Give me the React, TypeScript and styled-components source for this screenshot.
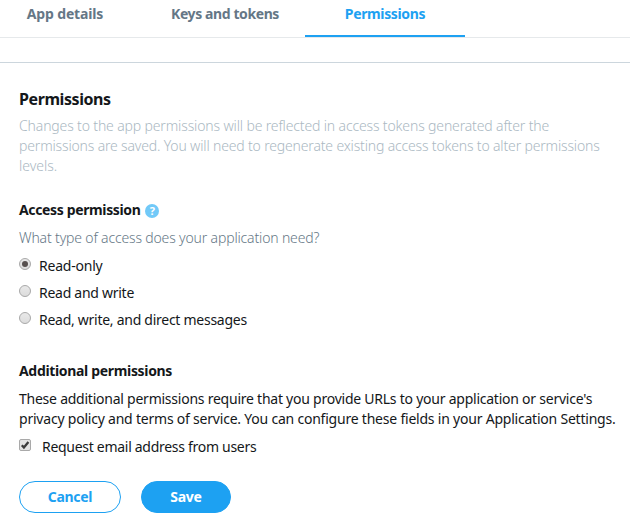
import React from 'react';
import styled, { createGlobalStyle } from 'styled-components';

const GlobalStyle = createGlobalStyle`
  * { box-sizing: border-box; }
  body {
    margin: 0;
    background: #fff;
    color: #14171a;
    font: 400 14px/20px 'Noto Sans', 'Open Sans', sans-serif;
  }
`;

const Page = styled.div`
  width: 630px;
  height: 520px;
  overflow: hidden;
`;

const TabBar = styled.nav`
  display: flex;
  height: 38px;
  margin-left: -15px;
  border-bottom: 1px solid #e6e9eb;
`;

const Tab = styled.a<{ $active?: boolean }>`
  display: flex;
  justify-content: center;
  width: 160px;
  height: 37px;
  padding-top: 4px;
  border-bottom: 2px solid ${p => (p.$active ? '#1da1f2' : 'transparent')};
  color: ${p => (p.$active ? '#1da1f2' : '#657786')};
  font-weight: 700;
`;

const Content = styled.main`
  margin-top: 24px;
  padding: 26px 0 0 19px;
  border-top: 1px solid #ccd6dd;
`;

const Title = styled.h1`
  margin: 0;
  font-size: 16px;
  font-weight: 700;
  line-height: 20px;
`;

const Heading = styled.h2`
  display: flex;
  align-items: center;
  gap: 5px;
  margin: 0;
  font-size: 14px;
  font-weight: 700;
  line-height: 20px;
`;

const Copy = styled.p<{ $tone?: 'muted' | 'hint' }>`
  margin: 0;
  color: ${p => (p.$tone === 'muted' ? '#aab8c2' : p.$tone === 'hint' ? '#657786' : '#14171a')};
  font-weight: ${p => (p.$tone ? 300 : 400)};
`;

const Line = styled.span<{ $track: number }>`
  display: block;
  white-space: nowrap;
  letter-spacing: ${p => p.$track}px;
`;

const Intro = styled.section`
  padding-bottom: 24px;
  ${Copy} { margin-top: 7px; }
`;

const Access = styled.section`
  padding-bottom: 31px;
  ${Copy} { margin-top: 8px; }
`;

const Extra = styled.section`
  ${Copy} { margin-top: 8px; }
`;

const Options = styled.div`
  display: flex;
  flex-direction: column;
  gap: 7px;
  margin-top: 8px;
`;

const Option = styled.label<{ $gap: number }>`
  display: flex;
  align-items: flex-start;
  gap: ${p => p.$gap}px;
  height: 20px;
`;

const Mark = styled.svg`
  display: block;
  flex: none;
  width: 12px;
  height: 12px;
  margin-top: 2px;
`;

const CheckRow = styled.div`
  margin-top: 8px;
`;

const Actions = styled.div`
  display: flex;
  gap: 20px;
  margin-top: 24px;
`;

const Button = styled.button<{ $width: number; $primary?: boolean }>`
  display: flex;
  align-items: center;
  justify-content: center;
  width: ${p => p.$width}px;
  height: 32px;
  padding: 0;
  border: 1px solid #1da1f2;
  border-radius: 16px;
  background: ${p => (p.$primary ? '#1da1f2' : '#fff')};
  color: ${p => (p.$primary ? '#fff' : '#1da1f2')};
  font: inherit;
  font-weight: 700;
`;

const HelpBadge = styled.span`
  display: flex;
  align-items: center;
  justify-content: center;
  width: 14px;
  height: 14px;
  margin-top: 2px;
  border-radius: 50%;
  background: #71c9f8;
  color: #fff;
  font-size: 11px;
  font-weight: 700;
  line-height: 14px;
`;

function Radio({ id, checked }: { id: string; checked?: boolean }) {
  return (
    <Mark viewBox="0 0 12 12">
      <defs>
        <linearGradient id={id} x1="0" y1="0" x2="0" y2="1">
          <stop offset="0" stopColor="#e9e9e9" />
          <stop offset="1" stopColor="#dcdcdc" />
        </linearGradient>
      </defs>
      <circle cx="6" cy="6" r="5.5" fill={`url(#${id})`} stroke="#a9a9a9" />
      {checked && <circle cx="6" cy="6" r="3" fill="#57504f" />}
    </Mark>
  );
}

function Checkbox() {
  return (
    <Mark viewBox="0 0 12 12">
      <rect x="0.5" y="0.5" width="11" height="11" rx="1.5" fill="#e4e4e4" stroke="#a9a9a9" />
      <path d="M2.8 6.2 4.9 8.4 9.4 3" fill="none" stroke="#3c3c3c" strokeWidth="2.3" />
    </Mark>
  );
}

const choices = [
  { id: 'read', label: 'Read-only', track: -0.22, checked: true },
  { id: 'write', label: 'Read and write', track: -0.27 },
  { id: 'direct', label: 'Read, write, and direct messages', track: -0.27 },
];

export default function App() {
  return (
    <>
      <GlobalStyle />
      <Page>
        <TabBar>
          <Tab><Line $track={-0.15}>App details</Line></Tab>
          <Tab><Line $track={-0.4}>Keys and tokens</Line></Tab>
          <Tab $active><Line $track={-0.35}>Permissions</Line></Tab>
        </TabBar>
        <Content>
          <Intro>
            <Title><Line $track={-0.42}>Permissions</Line></Title>
            <Copy $tone="muted">
              <Line $track={-0.145}>Changes to the app permissions will be reflected in access tokens generated after the</Line>
              <Line $track={-0.165}>permissions are saved. You will need to regenerate existing access tokens to alter permissions</Line>
              <Line $track={0}>levels.</Line>
            </Copy>
          </Intro>
          <Access>
            <Heading>
              <Line $track={-0.36}>Access permission</Line>
              <HelpBadge>?</HelpBadge>
            </Heading>
            <Copy $tone="hint"><Line $track={-0.16}>What type of access does your application need?</Line></Copy>
            <Options>
              {choices.map(c => (
                <Option key={c.id} $gap={8}>
                  <Radio id={c.id} checked={c.checked} />
                  <Line $track={c.track}>{c.label}</Line>
                </Option>
              ))}
            </Options>
          </Access>
          <Extra>
            <Heading><Line $track={-0.33}>Additional permissions</Line></Heading>
            <Copy>
              <Line $track={-0.24}>These additional permissions require that you provide URLs to your application or service's</Line>
              <Line $track={-0.215}>privacy policy and terms of service. You can configure these fields in your Application Settings.</Line>
            </Copy>
            <CheckRow>
              <Option $gap={11}>
                <Checkbox />
                <Line $track={-0.29}>Request email address from users</Line>
              </Option>
            </CheckRow>
          </Extra>
          <Actions>
            <Button $width={102}><Line $track={-0.3}>Cancel</Line></Button>
            <Button $width={90} $primary><Line $track={-0.3}>Save</Line></Button>
          </Actions>
        </Content>
      </Page>
    </>
  );
}
